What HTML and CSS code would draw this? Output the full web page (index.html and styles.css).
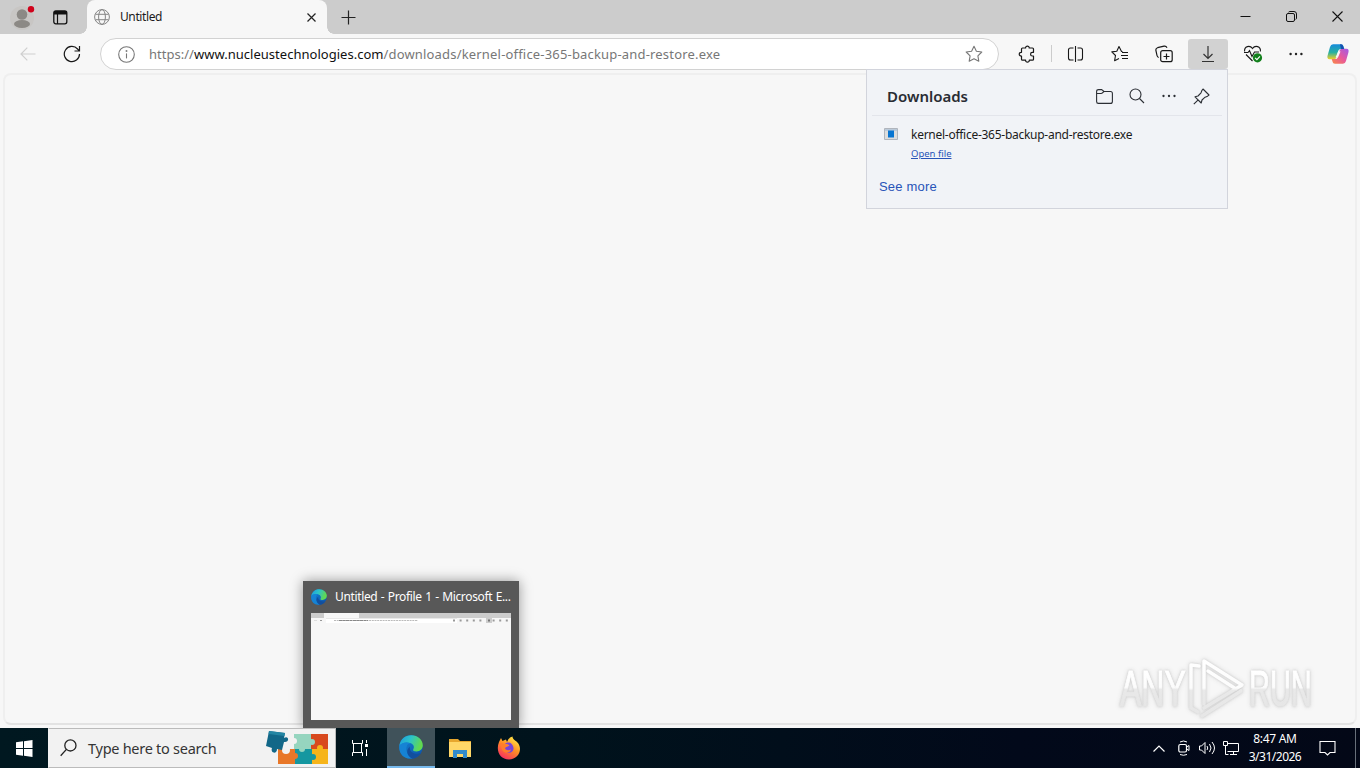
FILE: index.html
```html
<!DOCTYPE html>
<html lang="en">
<head>
<meta charset="utf-8">
<title>Untitled</title>
<link rel="stylesheet" href="styles.css">
</head>
<body>
<svg class="defs" aria-hidden="true">
  <defs>
    <linearGradient id="e1" x1="0" y1="0" x2="1" y2="1"><stop offset="0" stop-color="#168bd8"/><stop offset="1" stop-color="#0b4fa8"/></linearGradient>
    <linearGradient id="e2" x1="0" y1="0" x2="1" y2=".3"><stop offset="0" stop-color="#1c9be0"/><stop offset=".5" stop-color="#2cc3c8"/><stop offset="1" stop-color="#62d94e"/></linearGradient>
    <linearGradient id="c1" x1="0" y1="0" x2="0" y2="1"><stop offset="0" stop-color="#168bdc"/><stop offset=".55" stop-color="#28b0a0"/><stop offset="1" stop-color="#f0cf28"/></linearGradient>
    <linearGradient id="c2" x1="1" y1="0" x2="0" y2="1"><stop offset="0" stop-color="#a05ae8"/><stop offset=".5" stop-color="#e8589c"/><stop offset="1" stop-color="#fa8a45"/></linearGradient>
    <linearGradient id="f1" x1=".8" y1="0" x2=".2" y2="1"><stop offset="0" stop-color="#fff04a"/><stop offset=".45" stop-color="#ff9124"/><stop offset="1" stop-color="#f72665"/></linearGradient>
    <linearGradient id="wm" gradientUnits="userSpaceOnUse" x1="0" y1="0" x2="0" y2="64"><stop offset="0" stop-color="#fff"/><stop offset=".5" stop-color="#fcfcfc"/><stop offset=".54" stop-color="#e9e9e9"/><stop offset="1" stop-color="#e6e6e6"/></linearGradient>
    <linearGradient id="wt" gradientUnits="userSpaceOnUse" x1="0" y1="-36" x2="0" y2="0"><stop offset="0" stop-color="#fff"/><stop offset=".48" stop-color="#fcfcfc"/><stop offset=".54" stop-color="#e9e9e9"/><stop offset="1" stop-color="#e6e6e6"/></linearGradient>
    <symbol id="edge" viewBox="0 0 24 24">
      <circle cx="12" cy="12" r="11.7" fill="url(#e1)"/>
      <path d="M.4 11C1.300 4.300 6.400.3 12.300.3c6.600 0 11.500 4.700 11.500 10 0 3.900-3 6.200-6.300 6.200-2.500 0-3.900-1-3.300-2 1.500-2 .6-5.300-3-6.400C7.100 6.800 2.200 8 .4 11z" fill="url(#e2)"/>
      <path d="M8 10.500c-2 4.800.7 10.200 5.500 12.900C5 24.800-.6 18.500.4 11 1.600 7.700 8 6.500 11.500 8.500 9.700 8.600 8.600 9.200 8 10.500z" fill="#1683d4"/>
      <path d="M10.900 11.700c-1.100 5 5.100 8.700 10.900 6.300-2 3.600-5.300 5.500-8.600 5.600-5.500-2.900-6.600-8.900-2.300-11.900z" fill="#124f9e"/>
    </symbol>
  </defs>
</svg>
<div class="screen">
  <header class="tabs">
    <div class="profile">
      <svg class="avatar" width="26" height="26" viewBox="0 0 26 26"><circle cx="12" cy="14" r="12" fill="#c8c6c4"/><circle cx="12" cy="10.500" r="5.300" fill="#8c8985"/><ellipse cx="12" cy="20" rx="8" ry="4" fill="#8c8985"/><circle cx="21" cy="5.200" r="3.200" fill="#d0021b"/></svg>
    </div>
    <div class="workspaces"><svg width="15" height="15" viewBox="0 0 15 15"><rect x=".8" y=".8" width="13" height="13" rx="2" fill="none" stroke="#111" stroke-width="1.300"/><path d="M1 1h13v3.500H1z" fill="#111"/><path d="M4.500 4v10" stroke="#111" stroke-width="1.200"/></svg></div>
    <div class="tab">
      <svg width="16" height="16" viewBox="0 0 16 16" fill="none" stroke="#858585"><circle cx="8" cy="8" r="7.400"/><ellipse cx="8" cy="8" rx="3.400" ry="7.400"/><path d="M1.500 5.300h13M1.500 10.700h13"/></svg>
      <span class="tab-title">Untitled</span>
      <svg class="tab-close" width="9" height="9" viewBox="0 0 9 9" stroke="#222" stroke-width="1.200"><path d="M.5.5l8 8M8.500.5l-8 8"/></svg>
    </div>
    <svg class="newtab" width="15" height="15" viewBox="0 0 15 15" stroke="#222" stroke-width="1.200"><path d="M7.500.5v14M.5 7.500h14"/></svg>
    <div class="window-controls">
      <span><svg width="11" height="11" viewBox="0 0 11 11" stroke="#111"><path d="M.5 5.500h10"/></svg></span>
      <span><svg width="11" height="11" viewBox="0 0 11 11" fill="none" stroke="#111"><rect x=".5" y="2.500" width="8" height="8" rx="1.500"/><path d="M2.500 1.200Q3 .5 4 .5h4Q10.500.5 10.500 3v4q0 1-.8 1.500"/></svg></span>
      <span><svg width="11" height="11" viewBox="0 0 11 11" stroke="#111" stroke-width="1.100"><path d="M.5.5l10 10M10.500.5l-10 10"/></svg></span>
    </div>
  </header>

  <nav class="toolbar">
    <span class="tool"><svg width="16" height="14" viewBox="0 0 16 14" fill="none" stroke="#cfcfcf" stroke-width="1.200"><path d="M15.500 7H1M7.300.7L1 7l6.300 6.300"/></svg></span>
    <span class="tool"><svg width="18" height="18" viewBox="0 0 18 18" fill="none" stroke="#181818" stroke-width="1.200"><path d="M16.500 9A7.600 7.600 0 1 1 14.600 4l1.700 1.800M16.500 1v5h-5"/></svg></span>
    <div class="address">
      <svg width="17" height="17" viewBox="0 0 17 17" fill="none" stroke="#777" stroke-width="1.100"><circle cx="8.500" cy="8.500" r="7.800"/><path d="M8.500 7.400v5"/><circle cx="8.500" cy="5" r=".4"/></svg>
      <span class="url">https://<b>www.nucleustechnologies.com</b><span class="path">/downloads/kernel-office-365-backup-and-restore.exe</span></span>
      <svg class="star" width="18" height="18" viewBox="0 0 18 18" fill="none" stroke="#777" stroke-width="1.100" stroke-linejoin="round"><path d="M9 1.300l2.400 4.900 5.400.8-3.900 3.800.9 5.400L9 13.700l-4.800 2.500.9-5.400L1.200 7l5.400-.8z"/></svg>
    </div>
    <div class="tools">
      <span class="tool"><svg width="18" height="18" viewBox="0 0 18 18" fill="none" stroke="#181818" stroke-width="1.200" stroke-linejoin="round"><path d="M4.500 3h3.100c-.3-2.500 3.900-2.500 3.600 0h3.300q1 0 1 1v3.300h-1.200c-2.300 0-2.300 3.700 0 3.700h1.200v3.200q0 1-1 1h-3.200c.3 2.500-4 2.500-3.700 0H4.500q-1 0-1-1V11C.5 11.300.5 7 3.500 7.300V4q0-1 1-1z"/></svg></span>
      <i class="divider"></i>
      <span class="tool split"><svg width="18" height="18" viewBox="0 0 18 18" fill="none" stroke="#181818" stroke-width="1.100"><path d="M8.500 1v16M6.500 3h-3Q1.500 3 1.500 5v8q0 2 2 2h3M10.500 3h3q2 0 2 2v8q0 2-2 2h-3"/></svg></span>
      <span class="tool fav"><svg width="18" height="18" viewBox="0 0 18 18" fill="none" stroke="#181818" stroke-width="1.100" stroke-linejoin="round"><path d="M11.500 6.500H10.500L8 1.500 5.800 6.200l-5 .7 3.700 3.600-.9 5.200L8 13.500M11 7.500h6M10 10.500h7M11 13.500h6"/></svg></span>
      <span class="tool collections"><svg width="18" height="18" viewBox="0 0 18 18" fill="none" stroke="#181818" stroke-width="1.200"><rect x="5.700" y="5.700" width="11.500" height="11" rx="2"/><path d="M11.500 8.500v6M8.500 11.500h6M3.700 12.500Q2.300 12 2 10.500L.9 5.300Q.6 3.300 2.600 2.700L9 1.200q2-.5 3 1.600"/></svg></span>
      <span class="tool active"><svg width="18" height="18" viewBox="0 0 18 18" fill="none" stroke="#333" stroke-width="1.200"><path d="M9 1v12.500M4.500 9L9 13.500 13.500 9M3 16.500h12"/></svg></span>
      <span class="tool heart"><svg width="20" height="18" viewBox="0 0 20 18" fill="none" stroke="#181818" stroke-width="1.100"><path d="M1.600 6.500C1 1 7 0 9.500 3.500 12 0 18 1 17.400 6.500M3 9.500l6.500 6.500M1 7.500h4l1.500-2L9 11.500 11.500 7H16"/><circle cx="14.500" cy="12.800" r="4.600" fill="#12801c" stroke="none"/><path d="M12.100 12.900l1.800 1.800 3-3.300" stroke="#fff"/></svg></span>
      <span class="tool"><svg width="14" height="4" viewBox="0 0 14 4" fill="#222"><circle cx="1.600" cy="2" r="1.200"/><circle cx="7" cy="2" r="1.200"/><circle cx="12.400" cy="2" r="1.200"/></svg></span>
      <span class="tool copilot"><svg width="22" height="20" viewBox="0 0 22 20"><path d="M6 .3h8c1.500 0 2 .7 2.500 2.200l.8 2.500H14c-2 0-2.500 1-3 2.600L9.500 13c-.5 1.500-1.200 2.200-2.700 2.200H2.500C.5 15.200 0 13.500.6 11.500L3 3Q3.800.3 6 .3z" fill="url(#c1)"/><path d="M16 19.700H8c-1.500 0-2-.7-2.500-2.200L4.700 15H8c2 0 2.500-1 3-2.600L12.500 7c.5-1.500 1.200-2.200 2.700-2.200h4.300c2 0 2.500 1.700 1.900 3.700L19 17q-.8 2.700-3 2.700z" fill="url(#c2)"/><path d="M11.300 7.300l2.200.3-2.600 6-2.300-.4z" fill="#f7f7f7"/><path d="M13 .3h1q1.500 0 2.100 1.700l1 3H14z" fill="#164fae"/></svg></span>
    </div>
  </nav>

  <main class="page">
    <svg class="watermark" width="208" height="66" viewBox="0 0 208 66" fill="none" stroke="url(#wm)">
      <text class="brand" x="0" y="0" transform="translate(4 50) scale(.64 1)">ANY</text>
      <text class="brand" x="0" y="0" transform="translate(133 50) scale(.58 1)">RUN</text>
      <path d="M83 10l-8-1v43l7 4M88 48V5l38 24-38 23M86 60l39-25M92 15l28 18" stroke-width="3.500" stroke-linejoin="round" stroke-linecap="round"/>
    </svg>
  </main>

  <footer class="taskbar">
    <span class="start"><svg width="17" height="17" viewBox="0 0 17 17" fill="#fff"><path d="M0 2.300L7 1.300V8H0zM8 1.200L16.500 0v8H8zM0 9h7v6.700l-7-1zM8 9h8.500v8L8 15.800z"/></svg></span>
    <div class="search">
      <svg width="17" height="18" viewBox="0 0 17 18" fill="none" stroke="#222" stroke-width="1.300"><circle cx="10.400" cy="6.400" r="5.600"/><path d="M6.400 10.400L.7 16.700"/></svg>
      <span class="search-text">Type here to search</span>
      <svg class="puzzle" width="62" height="36" viewBox="0 0 62 36">
        <path d="M28 4h17v15H28z" fill="#96d5bf"/><path d="M45 4h17v15H45z" fill="#d8491e"/><path d="M12 19h17v15H12z" fill="#e87728"/><path d="M29 19h17v15H29z" fill="#1597a0"/><path d="M46 19h16v15H46z" fill="#f6b41a"/>
        <circle cx="46" cy="12" r="3" fill="#96d5bf"/><circle cx="36" cy="19" r="3" fill="#96d5bf"/><circle cx="54" cy="18" r="3" fill="#f6b41a"/><circle cx="47" cy="27" r="3" fill="#1597a0"/><circle cx="29" cy="26" r="3" fill="#e87728"/><circle cx="20" cy="20" r="4" fill="#f2f2f2"/><circle cx="28" cy="11" r="3" fill="#f2f2f2"/>
        <path d="M3 1l16 2-1 5c5-3 6 5 0 4l-2 8-5-1c0 6-7 4-5-1l-6-2z" fill="#126788"/><path d="M3 1l16 2-.6 3L2.600 4z" fill="#2385a3"/>
      </svg>
    </div>
    <span class="app"><svg width="18" height="16" viewBox="0 0 18 16" fill="none" stroke="#fff"><path d="M1.500 0v3.500h10V0M1.500 16v-3.500h10V16M2.500 3.500v9M10.500 3.500v9M15.500 0v3M15.500 9v7"/><path d="M14 4h3v3h-3z" fill="#fff" stroke="none"/></svg></span>
    <span class="app current"><svg width="24" height="24"><use href="#edge"/></svg></span>
    <span class="app"><svg width="22" height="19" viewBox="0 0 22 19"><path d="M0 0h9l2 2h11v16H0z" fill="#e7a72e"/><path d="M0 3h22v15H0z" fill="#ffd768"/><path d="M4 19v-8h14v8h-4v-4H8v4z" fill="#328bcb"/></svg></span>
    <span class="app"><svg width="24" height="24" viewBox="0 0 24 24"><path d="M2 6l2-4 1.500 3L9 3.500l1 2.500Q12 1 15.500.5c0 3 3.500 4 5.500 6.500 5 7 0 16.500-9 16.500S-1.500 15 2 6z" fill="url(#f1)"/><path d="M8 8c3-3 8-1 8.500 4 .4 4-4 6.500-8 3.500-2.500-2-1.500-4 .5-4.500 1.600-.4 2-1 3.500-1.500-1.500-1.200-2.500-1.500-4.500-1.500z" fill="#7745d8"/><path d="M3 7c2 0 5 1 9 2.500-2 1-3.500 1.500-4 3 1 2 4 2 6 1-1 4-7 4.500-9 0z" fill="#ff7d2b"/></svg></span>
    <div class="tray">
      <svg class="chev" width="12" height="7" viewBox="0 0 12 7" fill="none" stroke="#fff" stroke-width="1.200"><path d="M.5 6.500L6 1l5.500 5.500"/></svg>
      <svg class="cam" width="12" height="16" viewBox="0 0 12 16" fill="none" stroke="#fff"><rect x=".8" y="4.500" width="7.700" height="7.500" rx="1.500" stroke-width="1.200"/><path d="M8.500 7l2.500-1.500v5L8.500 9M2 2q3.500-2 7 0M2 14.500q3.500 1.500 7 0"/></svg>
      <svg class="sound" width="17" height="14" viewBox="0 0 17 14" fill="none" stroke="#fff"><path d="M.5 5h2L6 1.500v11L2.500 9h-2zM8 5q1.500 2 0 4M10.500 3q3 4 0 8M13 1q5 6 0 12"/></svg>
      <svg class="net" width="17" height="15" viewBox="0 0 17 15" fill="none" stroke="#fff"><path d="M4.500 2.500h11v8h-11M10.500 10.500v3M7 13.500h7"/><path d="M.5.500h4v4h-4zM2.500 4.500v9h3"/></svg>
      <div class="clock"><span class="time">8:47 AM</span><span class="date">3/31/2026</span></div>
      <svg class="notice" width="17" height="17" viewBox="0 0 17 17" fill="none" stroke="#fff" stroke-width="1.100"><path d="M1 1.500h15v11h-5L8.500 15 6 12.500H1z"/></svg>
      <i class="desktop-edge"></i>
    </div>
  </footer>

  <section class="downloads">
    <div class="dl-head"><h1>Downloads</h1>
      <svg class="folder" width="17" height="15" viewBox="0 0 17 15" fill="none" stroke="#2b2e34" stroke-width="1.100"><path d="M.6 2.500q0-1.900 2-1.900h3L8 2.500h6.500q1.900 0 1.900 2v7.900q0 2-2 2h-12q-1.800 0-1.800-2zM.6 4.500H5q1 0 1.700-.8L8 2.500"/></svg>
      <svg width="16" height="16" viewBox="0 0 16 16" fill="none" stroke="#2b2e34" stroke-width="1.100"><circle cx="6.500" cy="6.500" r="5.500"/><path d="M10.500 10.500L15 15"/></svg>
      <svg width="14" height="4" viewBox="0 0 14 4" fill="#2b2e34"><circle cx="1.500" cy="2" r="1.150"/><circle cx="7" cy="2" r="1.150"/><circle cx="12.500" cy="2" r="1.150"/></svg>
      <svg width="17" height="17" viewBox="0 0 17 17" fill="none" stroke="#2b2e34" stroke-width="1.100" stroke-linejoin="round"><path d="M10 1l6 6-1.400 1.200-2.500 1L9 12l-.8 3L2 8.800 5 8l3-3.200 1-2.500zM5.200 11.800L.8 16.200"/></svg>
    </div>
    <div class="dl-item">
      <svg width="14" height="12" viewBox="0 0 14 12"><path d="M.5.500h13v11H.5z" fill="#ddd" stroke="#b0b5bd"/><path d="M1 1h12v2H1z" fill="#bbcada"/><path d="M4 2.500h6v7H4z" fill="#0875d1"/></svg>
      <div class="dl-info"><span class="dl-name">kernel-office-365-backup-and-restore.exe</span><a class="dl-open">Open file</a></div>
    </div>
    <a class="more">See more</a>
  </section>

  <aside class="preview">
    <div class="preview-title"><svg width="16" height="16"><use href="#edge"/></svg><span>Untitled - Profile 1 - Microsoft E...</span></div>
    <div class="thumb"><div class="thumb-tabs"><i></i></div>
      <svg width="200" height="7" viewBox="0 0 200 7" fill="none"><path d="M15 .500H146" stroke="#e8e8e8"/><path d="M15 1h131v4H15z" fill="#fff"/><path d="M23 2.500h84" stroke="#bbb" stroke-dasharray="2 .7"/><path d="M28 2.500h29" stroke="#888" stroke-dasharray="3 .5"/><path d="M142 2.500h55" stroke="#999" stroke-width="2" stroke-dasharray="2 4.600"/><path d="M175 0h6v5h-6z" fill="#ccc"/><path d="M177 2.500h2" stroke="#777" stroke-width="2"/><path d="M3 2.500h3" stroke="#ddd"/><path d="M9 2.500h2" stroke="#999"/></svg>
    </div>
  </aside>
</div>
</body>
</html>
```

FILE: styles.css
```css
* { box-sizing: border-box; }
body { margin: 0; overflow: hidden; font-family: "Noto Sans", "Open Sans", sans-serif; color: #1b1b1b; }
svg { display: block; flex: none; }
.defs { position: absolute; width: 0; height: 0; }
.screen { position: relative; width: 1360px; height: 768px; display: flex; flex-direction: column; background: #f7f7f7; }
.tabs { height: 34px; flex: none; background: #ccc; display: flex; align-items: center; }
.profile { width: 40px; padding-left: 10px; }
.workspaces { width: 47px; padding-left: 13px; }
.tab { position: relative; width: 240px; height: 34px; background: #f7f7f7; border-radius: 8px 8px 0 0; display: flex; align-items: center; padding: 0 11px 0 7px; }
.tab::before, .tab::after { content: ""; position: absolute; bottom: 0; width: 7px; height: 7px; }
.tab::before { left: -7px; background: radial-gradient(circle at 0 0, #ccc 6.500px, #f7f7f7 7px); }
.tab::after { right: -7px; background: radial-gradient(circle at 100% 0, #ccc 6.500px, #f7f7f7 7px); }
.tab-title { margin-left: 10px; font-size: 12px; line-height: 16px; letter-spacing: -.4px; }
.tab-close { margin-left: auto; }
.newtab { margin-left: 14px; }
.window-controls { margin-left: auto; display: flex; }
.window-controls span { width: 46px; display: flex; justify-content: center; padding-bottom: 1px; }
.toolbar { height: 39px; flex: none; display: flex; align-items: center; padding: 0 2px 0 8px; }
.tool { width: 40px; height: 30px; flex: none; display: flex; align-items: center; justify-content: center; }
.toolbar > .tool + .tool { margin-left: 4px; }
.address { width: 899px; height: 32px; margin: 1px 0 0 8px; border: 1px solid #d2d2d2; border-radius: 16px; background: #fff; display: flex; align-items: center; padding: 0 15px 0 17px; }
.url { margin-left: 14px; font-size: 13px; line-height: 18px; color: #777; white-space: nowrap; letter-spacing: .02px; }
.url b { font-weight: 400; color: #111; }
.path { letter-spacing: .18px; }
.star { margin-left: auto; }
.tools { display: flex; align-items: center; margin-left: 8px; gap: 4px; }
.divider { width: 1px; height: 17px; background: #ccc; margin: 0 -1px 0 0; }
.split { padding-left: 1px; }
.fav, .heart { padding-left: 2px; }
.collections { margin-left: 1px; }
.active { background: #d2d2d2; border-radius: 3px; }
.copilot { margin-left: -2px; }
.page { height: 652px; flex: none; margin: 0 3px; border: 2px solid #efefef; border-bottom-color: #e3e3e3; border-radius: 8px; display: flex; align-items: flex-end; justify-content: flex-end; padding: 0 31px 1px; }
.watermark { filter: drop-shadow(0 0 1px #ccc) drop-shadow(0 0 2px #ddd); }
.brand { font: 50px "Liberation Sans", sans-serif; fill: url(#wt); stroke: url(#wt); stroke-width: 1px; }
.taskbar { margin-top: auto; height: 40px; flex: none; display: flex; background: linear-gradient(90deg, #001820, #00131c 40%, #02091a 75%, #030817); }
.start, .app { width: 48px; display: flex; align-items: center; justify-content: center; }
.app { width: 49px; }
.search { width: 288px; background: #f2f2f2; border: 1px solid #bbb; border-left-color: #f2f2f2; display: flex; align-items: center; padding: 0 7px 0 11px; }
.search-text { margin-left: 11px; font-size: 14.500px; line-height: 20px; letter-spacing: -.27px; color: #353535; white-space: nowrap; }
.puzzle { margin-left: auto; }
.search + .app { width: 51px; padding-right: 3px; }
.current { width: 48px; background: #40525a; border-bottom: 2px solid #76b9ed; }
.tray { margin-left: auto; display: flex; align-items: center; color: #fff; }
.cam { margin-left: 13px; }
.sound { margin-left: 9px; }
.net { margin-left: 7px; }
.clock { width: 64px; margin-left: 3px; display: flex; flex-direction: column; align-items: center; font-size: 12px; line-height: 18px; white-space: nowrap; }
.time { letter-spacing: -.3px; }
.date { letter-spacing: -.5px; }
.notice { margin-left: 12px; }
.desktop-edge { width: 1px; height: 40px; background: #68707a; margin: 0 4px 0 19px; }
.downloads { position: absolute; left: 866px; top: 69px; width: 362px; height: 140px; background: #f1f3f7; border: 1px solid #d2d4dc; }
.dl-head { height: 46px; margin: 0 5px; padding: 7px 12px 0 15px; border-bottom: 1px solid #e3e5eb; display: flex; align-items: center; gap: 17px; }
.dl-head h1 { margin: 0 auto 0 0; font-size: 15px; line-height: 20px; font-weight: 600; color: #292c33; }
.folder { margin-right: -1px; }
.dl-item { display: flex; align-items: flex-start; padding: 12px 0 0 17px; }
.dl-info { display: flex; flex-direction: column; align-items: flex-start; margin: -2px 0 0 13px; }
.dl-name { font-size: 12px; line-height: 18px; letter-spacing: -.27px; white-space: nowrap; }
.dl-open { margin-top: 3px; font-size: 9.500px; line-height: 14px; color: #2854b8; text-decoration: underline; }
.more { display: block; margin: 17px 0 0 12px; font: 13px/18px "Liberation Sans", sans-serif; letter-spacing: .2px; color: #2854b8; }
.preview { position: absolute; left: 303px; top: 581px; width: 216px; height: 147px; padding: 0 8px; background: #585858; box-shadow: 0 0 12px rgba(0,0,0,.4); clip-path: inset(-16px -16px 0 -16px); }
.preview-title { height: 32px; display: flex; align-items: center; color: #fff; font-size: 12px; white-space: nowrap; }
.preview-title span { margin: -1px 0 0 8px; letter-spacing: -.35px; word-spacing: .7px; }
.thumb { height: 107px; background: #f7f7f7; }
.thumb-tabs { height: 5px; background: #ccc; padding-left: 13px; }
.thumb-tabs i { display: block; width: 35px; height: 5px; background: #f7f7f7; }
```
